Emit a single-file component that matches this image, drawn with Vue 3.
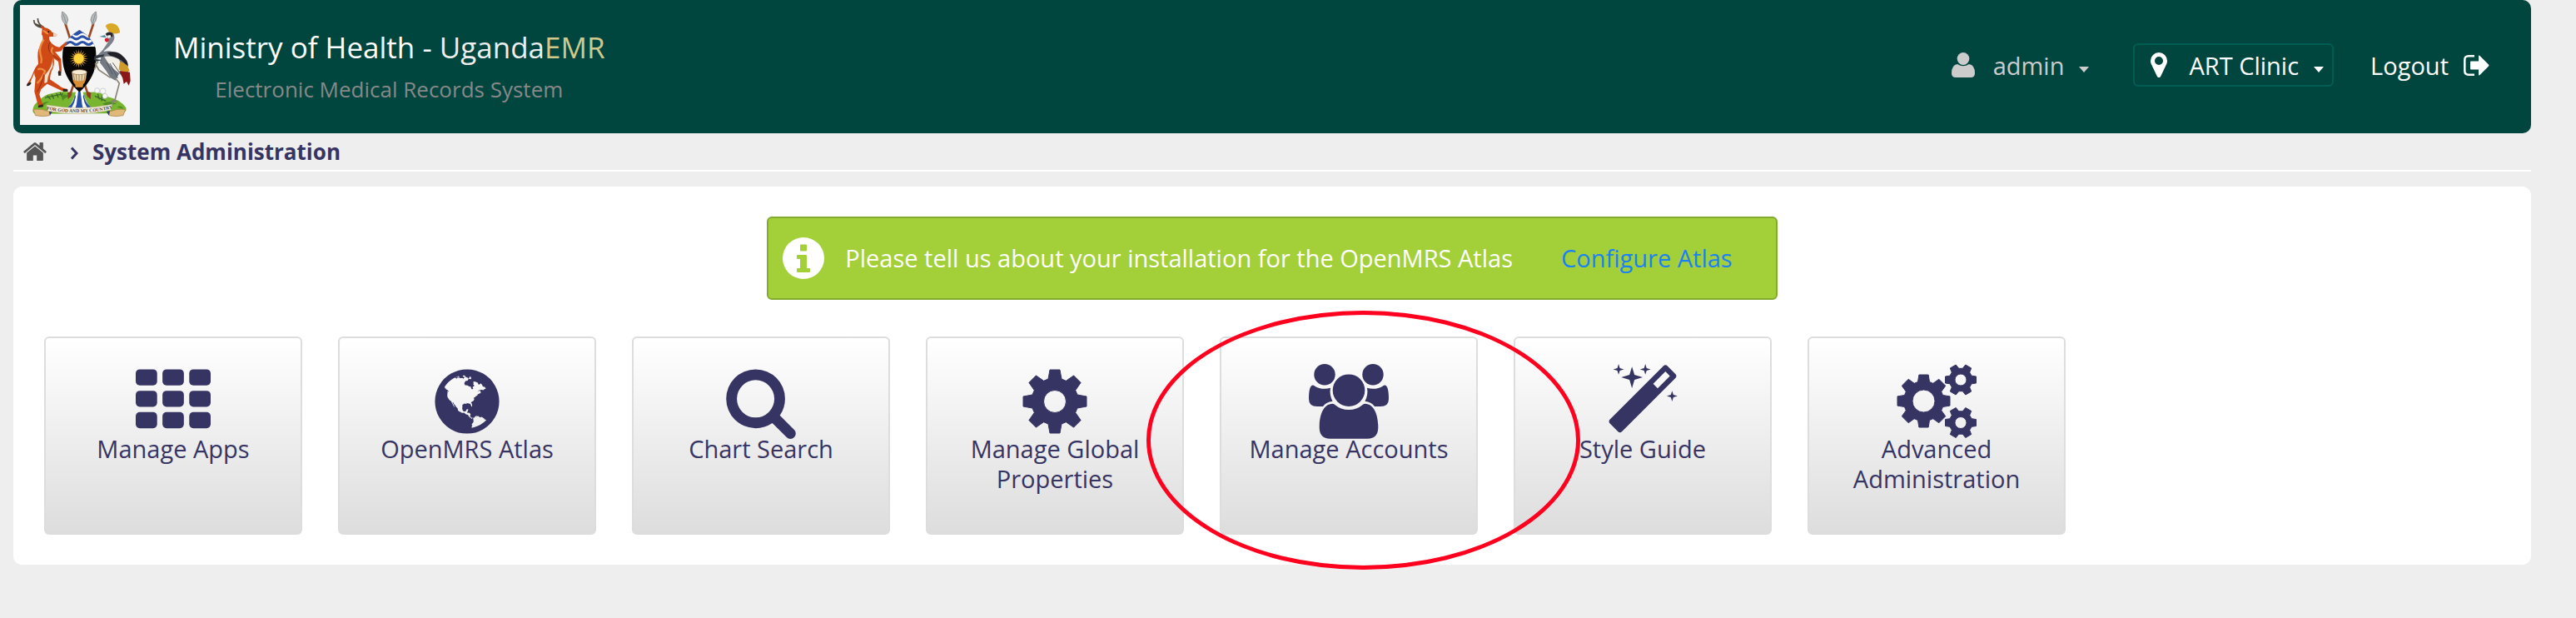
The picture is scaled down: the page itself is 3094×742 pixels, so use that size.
<script setup>
// Outline of a cog wheel with evenly spaced trapezoid teeth and a round hole.
function cog(cx, cy, teeth, outer, root, tip, base, hole, start) {
  const pts = []
  for (let i = 0; i < teeth; i++) {
    const a = start + (i * 2 * Math.PI) / teeth
    const c = Math.cos(a)
    const s = Math.sin(a)
    for (const [x, y] of [[-base, -root], [-tip, -outer], [tip, -outer], [base, -root]]) {
      pts.push(`${(cx + x * c - y * s).toFixed(1)} ${(cy + x * s + y * c).toFixed(1)}`)
    }
  }
  return `M${pts.join('L')}ZM${cx - hole} ${cy}a${hole} ${hole} 0 1 0 ${2 * hole} 0a${hole} ${hole} 0 1 0 ${-2 * hole} 0Z`
}

const singleCog = cog(45, 45, 8, 38, 27, 6, 8, 13.5, 0)
const bigCog = cog(32.5, 44.5, 8, 31.5, 23, 5.6, 7, 13.5, 0)
const upperCog = cog(77, 19, 6, 18.5, 13, 4, 4.8, 7, Math.PI / 6)
const lowerCog = cog(77, 70.5, 6, 18.5, 13, 4, 4.8, 7, Math.PI / 6)

const rays = Array.from({ length: 20 }, (_, i) => i * 18)
const cells = [0, 1, 2].flatMap((r) => [0, 1, 2].map((c) => ({ x: c * 640, y: 128 + r * 512 })))

const apps = [
  { id: 'apps', label: 'Manage Apps' },
  { id: 'atlas', label: 'OpenMRS Atlas' },
  { id: 'search', label: 'Chart Search' },
  { id: 'properties', label: 'Manage Global Properties' },
  { id: 'accounts', label: 'Manage Accounts', marked: true },
  { id: 'style', label: 'Style Guide' },
  { id: 'advanced', label: 'Advanced Administration' },
]
</script>

<template>
  <div class="page">
    <header class="header">
      <a href="#" class="crest" aria-label="Home page">
        <svg viewBox="42 18 432 432" aria-hidden="true">
          <rect x="42" y="18" width="432" height="432" fill="#f4f4f4" />
          <!-- mound -->
          <path d="M88 398Q90 374 108 366Q128 340 160 336Q190 326 218 332L300 332Q330 330 356 348Q404 358 424 388Q428 404 410 408L100 410Q88 408 88 398Z" fill="#78b62f" />
          <path d="M104 386q20-22 44-20q-20 8-24 22zM190 344q18-8 30 4q-20 4-24 16zM340 374q26-14 50 0q-24 2-30 14zM392 386q14-10 24 6z" fill="#4f8d22" />
          <path d="M132 352l66-14M140 344l12 14M156 340l8 16M174 336l6 16M186 332l6 14M312 346l40 18M322 338l6 20M338 344l-2 20" stroke="#3d6a2a" stroke-width="4" fill="none" />
          <g fill="#f7f7f7" stroke="#aaa" stroke-width="1.5"><circle cx="320" cy="326" r="9" /><circle cx="341" cy="328" r="10" /><circle cx="348" cy="346" r="9" /></g>
          <!-- river -->
          <path d="M244 330H268Q276 362 298 392H212Q236 364 244 330Z" fill="#fff" />
          <path d="M252 330H260L264 360Q266 388 272 394H240Q248 374 248 358ZM240 340Q236 372 214 386L226 392Q240 370 243 348ZM272 340Q276 372 298 386L286 392Q272 370 269 348Z" fill="#2950a8" />
          <!-- spears -->
          <path d="M205 84L290 350M307 84L220 350" stroke="#9b4a26" stroke-width="8" />
          <path d="M194 42Q212 50 215 72L209 90Q194 80 192 60ZM316 42Q300 50 297 72L303 90Q318 78 318 60Z" fill="#b7bcbf" stroke="#6d7274" stroke-width="2" />
          <path d="M198 50L208 84M313 50L304 84" stroke="#74797b" stroke-width="2" />
          <path d="M213 334l12-4 4 12-14 16zM298 334l-12-4-4 12 14 16z" fill="#8c3f24" />
          <!-- shield -->
          <clipPath id="shield"><path d="M256 108Q300 134 314 172Q330 268 256 332Q182 268 198 172Q212 134 256 108Z" /></clipPath>
          <g clip-path="url(#shield)">
            <rect x="180" y="100" width="152" height="240" fill="#060606" />
            <rect x="180" y="100" width="152" height="68" fill="#fff" />
            <path d="M190 124q11 9 22 0t22 0 22 0 22 0 22 0 22 0V96H190z" fill="#2950a8" />
            <path d="M190 136q11 9 22 0t22 0 22 0 22 0 22 0 22 0M190 156q11 9 22 0t22 0 22 0 22 0 22 0 22 0" fill="none" stroke="#2950a8" stroke-width="9" />
          </g>
          <path v-for="r in rays" :key="r" d="M250 211L254 177L258 211Z" fill="#f3bd32" :transform="`rotate(${r} 254 211)`" />
          <circle cx="254" cy="211" r="19" fill="#ffd33c" stroke="#9c6a12" stroke-width="2" />
          <path d="M230 264Q230 298 241 304L242 314H268L270 304Q282 294 281 264Z" fill="#d98e35" />
          <path d="M229 262L235 288Q255 296 276 288L283 262Z" fill="#e8d5ac" />
          <path d="M234 266l5 23M244 266l2 25M255 266v26M266 266l-2 25M277 266l-4 23" stroke="#7b5b35" stroke-width="2" />
          <ellipse cx="256" cy="260" rx="27" ry="9" fill="#f5ecd6" stroke="#8f6e42" stroke-width="2" />
          <!-- antelope -->
          <path d="M124 100Q92 96 92 72M128 98Q106 88 106 66M132 102Q118 94 98 86" fill="none" stroke="#514b3e" stroke-width="5" />
          <path d="M122 104Q114 94 120 92L132 100Q148 102 158 116L175 124Q176 132 164 132L148 132Q144 142 156 156Q172 170 184 170L208 150L212 156L190 184Q176 188 168 186L190 212L192 254L186 274L178 262L184 252L180 222L164 210Q168 236 156 256Q150 272 150 286L180 306Q196 320 212 320L214 330L194 328L140 302Q130 310 118 322L112 340L124 378L110 386L106 376L94 330L98 280Q92 268 94 262Q84 284 78 300L68 302Q84 280 92 256Q98 240 108 230L106 204Q104 176 122 154Q128 134 120 124Z" fill="#cf4a17" />
          <path d="M128 142Q108 172 116 196Q122 212 118 228M126 110L144 122M106 250Q120 244 132 256Q124 280 104 300M160 170Q150 188 162 198" fill="none" stroke="#ee8b3c" stroke-width="7" />
          <path d="M160 206Q160 240 132 270L130 300L140 296Q144 262 160 240Z" fill="#f1dfc7" />
          <path d="M128 268Q118 310 104 330M150 152Q140 170 150 188Q160 200 184 216" fill="none" stroke="#8e2a10" stroke-width="3" />
          <path d="M66 310Q64 298 82 296L82 302Q76 310 66 310ZM180 256L190 258L190 272L180 272ZM196 320L214 322L214 330L198 330ZM108 380L124 376L126 384L108 388Z" fill="#2d2420" />
          <circle cx="145" cy="115" r="3" fill="#1b1010" />
          <path d="M162 118l12 5 0 8-12 0z" fill="#f0d2bd" />
          <!-- crane -->
          <path d="M366 120L350 94Q362 78 386 88Q402 98 402 118Q384 124 366 120Z" fill="#d8a826" />
          <path d="M356 126Q364 112 378 120Q388 134 376 152Q364 170 346 182L340 194L326 206L318 216L322 198L340 180Q352 164 360 150Z" fill="#7b828b" />
          <path d="M350 122Q362 110 376 120L376 132L360 136Z" fill="#25252b" />
          <path d="M328 132L348 126L352 136Z" fill="#4d8f99" />
          <path d="M356 128l12-2 2 8-10 4z" fill="#f4f4f4" /><path d="M348 140q8-8 14 2q0 10-8 10q-8-4-6-12z" fill="#d8192c" />
          <path d="M338 188Q366 176 394 196Q420 214 428 240L436 282L420 284L400 264L386 290L368 280L352 254L330 226Z" fill="#727982" />
          <path d="M346 204Q372 198 398 214L412 240L400 264Q364 240 346 204Z" fill="#f2efe8" />
          <path d="M356 190Q392 180 412 202Q432 218 432 240L408 218Q390 204 366 200Z" fill="#202026" />
          <path d="M402 222Q430 228 437 256L414 262L398 250Z" fill="#cf9a28" />
          <path d="M400 256L438 260L440 292L434 308L426 294L416 302L412 282Z" fill="#8b1718" />
          <path d="M312 200l34-4-4 8-32 8 28 4-20 6-10-8z" fill="#333940" />
          <path d="M386 282L400 300L384 360L390 370M384 360L368 366M384 360L374 374M368 280L326 252L314 230L324 224M318 232L310 250" fill="none" stroke="#8b8373" stroke-width="5" />
          <path d="M366 228L394 282M376 226L404 266M354 224L376 268" stroke="#525962" stroke-width="3" />
          <!-- motto ribbon -->
          <path d="M90 394Q120 390 148 402L148 416Q126 422 98 416ZM422 394Q392 390 364 402L364 416Q386 422 414 416Z" fill="#e0b97a" stroke="#a37c43" stroke-width="2" />
          <path d="M146 398l12 4-8 14zM366 398l-12 4 8 14z" fill="#2d3a75" />
          <path id="motto" d="M140 394Q256 418 374 391" fill="none" />
          <path d="M138 378Q256 400 374 376L370 396Q256 422 142 400Z" fill="#f5efdc" stroke="#b9aa86" stroke-width="1.5" />
          <text class="motto"><textPath href="#motto" startOffset="50%" text-anchor="middle">FOR GOD AND MY COUNTRY</textPath></text>
        </svg>
      </a>
      <div class="brand">
        <h1>Ministry of Health - <span class="uganda">Uganda</span><span class="emr">EMR</span></h1>
        <p>Electronic Medical Records System</p>
      </div>
      <nav class="session" aria-label="Session">
        <button type="button" class="user">
          <svg class="person" viewBox="0 0 28 30" aria-hidden="true"><ellipse cx="14" cy="7.5" rx="7.3" ry="7.5" /><path d="M7 14Q14 18.500 21 14Q28 15 28 25Q28 30 23 30H5Q0 30 0 25Q0 15 7 14Z" /></svg>
          <span>admin</span>
          <svg class="caret" viewBox="0 0 12 7" aria-hidden="true"><path d="M0 0H12L6 7Z" /></svg>
        </button>
        <button type="button" class="location">
          <svg class="pin" viewBox="384 128 1024 1536" aria-hidden="true"><path d="M1152 640q0-106-75-181t-181-75-181 75-75 181 75 181 181 75 181-75 75-181zm256 0q0 109-33 179l-364 774q-16 33-47.5 52t-67.5 19-67.5-19-46.5-52l-365-774q-33-70-33-179 0-212 150-362t362-150 362 150 150 362z" /></svg>
          <span>ART Clinic</span>
          <svg class="caret" viewBox="0 0 12 7" aria-hidden="true"><path d="M0 0H12L6 7Z" /></svg>
        </button>
        <a href="#" class="logout">
          <span>Logout</span>
          <svg class="exit" viewBox="0 0 31 25" aria-hidden="true"><path d="M13 1.300H6Q1.300 1.300 1.300 6V19Q1.300 23.700 6 23.700H13" fill="none" stroke="currentColor" stroke-width="2.500" /><path d="M9 7.500H18V1.500Q18 0 19.500 1L30 11.500Q31 12.500 30 13.500L19.500 24Q18 25 18 23.500V17.500H9Q8 17.500 8 16.500V8.500Q8 7.500 9 7.500Z" /></svg>
        </a>
      </nav>
    </header>

    <nav class="crumbs" aria-label="Breadcrumb">
      <a href="#" class="home" aria-label="Home">
        <svg viewBox="89 253 1614 1283" aria-hidden="true"><path d="M1472 992v480q0 26-19 45t-45 19h-384v-384h-256v384h-384q-26 0-45-19t-19-45v-480q0-1 .5-3t.5-3l575-474 575 474q1 2 1 6zm223-69l-62 74q-8 9-21 11h-3q-13 0-21-7l-692-577-692 577q-12 8-24 7-13-2-21-11l-62-74q-8-10-7-23.500t11-21.500l719-599q32-26 76-26t76 26l244 204v-195q0-14 9-23t23-9h192q14 0 23 9t9 23v408l219 182q10 8 11 21.500t-7 23.500z" /></svg>
      </a>
      <svg class="chevron" viewBox="0 0 10 16" aria-hidden="true"><path d="M2 1.500L8 8L2 14.500" /></svg>
      <span>System Administration</span>
    </nav>

    <main class="panel">
      <div class="notice" role="status">
        <svg class="info" viewBox="0 0 50 50" aria-hidden="true">
          <circle cx="25" cy="25" r="25" fill="#fff" />
          <path d="M22 8.500h6q1 0 1 1v6q0 1-1 1h-6q-1 0-1-1v-6q0-1 1-1zM18 21h10q1 0 1 1v15h3q1 0 1 1v3q0 1-1 1h-14q-1 0-1-1v-3q0-1 1-1h3V26h-3q-1 0-1-1v-3q0-1 1-1z" fill="#a3d039" />
        </svg>
        <p>Please tell us about your installation for the OpenMRS Atlas</p>
        <a href="#">Configure Atlas</a>
      </div>

      <div class="apps">
        <a v-for="app in apps" :key="app.id" href="#" class="app">
          <svg v-if="app.id === 'apps'" class="icon" viewBox="0 0 1792 1792" aria-hidden="true"><rect v-for="(c, i) in cells" :key="i" :x="c.x" :y="c.y" width="512" height="384" rx="96" /></svg>
          <svg v-else-if="app.id === 'atlas'" class="icon" viewBox="0 0 1792 1792" aria-hidden="true"><path d="M896 128q209 0 385.5 103t279.5 279.5 103 385.5-103 385.5-279.5 279.5-385.5 103-385.5-103-279.5-279.5-103-385.5 103-385.5 279.5-279.5 385.5-103zm274 521q-2 1-9.5 9.5t-13.5 9.5q2 0 4.5-5t5-11 3.5-7q6-7 22-15 14-6 52-12 34-8 51 11-2-2 9.5-13t14.5-12q3-2 15-4.5t15-7.5l2-22q-12 1-17.5-7t-6.5-21q0 2-6 8 0-7-4.5-8t-11.5 1-9 1q-10-3-15-7.5t-8-16.500-4-15q-2-5-9.500-11t-9.500-10q-1-2-2.500-5.500t-3-6.500-4-5.500-5.500-2.500-7 5-7.500 10-4.500 5q-3-2-6-1.500t-4.500 1-4.500 3-5 3.500q-3 2-8.500 3t-8.500 2q15-5-1-11-10-4-16-3 9-4 7.500-12t-8.500-14h5q-1-4-8.500-8.500t-17.500-8.500-13-6q-8-5-34-9.500t-33-.5q-5 6-4.500 10.500t4 14 3.500 12.500q1 6-5.500 13t-6.500 12q0 7 14 15.500t10 21.500q-3 8-16 16t-16 12q-5 8-1.500 18.500t10.500 16.500q2 2 1.500 4t-3.500 4.500-5.500 4-6.500 3.500l-3 2q-11 5-20.500-6t-13.500-26q-7-25-16-30-23-8-29 1-5-13-41-26-25-9-58-4 6-1 0-15-7-15-19-12 3-6 4-17.500t1-13.500q3-13 12-23 1-1 7-8.500t9.500-13.500.5-6q35 4 50-11 5-5 11.500-17t10.500-17q9-6 14-5.500t14.500 5.500 14.500 5q14 1 15.500-11t-7.500-20q12 1 3-17-4-7-8-9-12-4-27 5-8 4 2 8-1-1-9.500 10.500t-16.500 17.500-16-5q-1-1-5.500-13.500t-9.500-13.500q-8 0-16 15 3-8-11-15t-24-8q19-12-8-27-7-4-20.500-5t-19.500 4q-5 7-5.500 11.500t5 8 10.500 5.500 11.500 4 8.500 3q14 10 8 14-2 1-8.500 3.500t-11.500 4.500-6 4q-3 4 0 14t-2 14q-5-5-9-17.500t-7-16.500q7 9-25 6l-10-1q-4 0-16 2t-20.500 1-13.500-8q-4-8 0-20 1-4 4-2-4-3-11-9.500t-10-8.500q-46 15-94 41 6 1 12-1 5-2 13-6.500t10-5.500q34-14 42-7l5-5q14 16 20 25-7-4-30-1-20 6-22 12 7 12 5 18-4-3-11.500-10t-14.500-11-15-5q-16 0-22 1-146 80-235 222 7 7 12 8 4 1 5 9t2.500 11 11.500-3q9 8 3 19 1-1 44 27 19 17 21 21 3 11-10 18-1-2-9-9t-9-4q-3 5 .5 18.500t10.500 12.500q-7 0-9.500 16t-2.500 35.500-1 23.500l2 1q-3 12 5.500 34.500t21.500 19.500q-13 3 20 43 6 8 8 9 3 2 12 7.500t15 10 10 10.500q4 5 10 22.500t14 23.500q-2 6 9.500 20t10.500 23q-1 0-2.500 1t-2.500 1q3 7 15.500 14t15.500 13q1 3 2 10t3 11 8 2q2-20-24-62-15-25-17-29-3-5-5.500-15.500t-4.500-14.500q2 0 6 1.500t8.500 3.500 7.500 4 2 3q-3 7 2 17.500t12 18.500 17 19 12 13q6 6 14 19.500t0 13.500q9 0 20 10t17 20q5 8 8 26t5 24q2 7 8.500 13.500t12.500 9.500l16 8 13 7q5 2 18.500 10.500t21.500 11.500q10 4 16 4t14.500-2.500 13.500-3.500q15-2 29 15t21 21q36 19 55 11-2 1 .5 7.500t8 15.500 9 14.500 5.500 8.500q5 6 18 15t18 15q6-4 7-9-3 8 7 20t18 10q14-3 14-32-31 15-49-18 0-1-2.500-5.500t-4-8.500-2.500-8.500 0-7.500 5-3q9 0 10-3.500t-2-12.500-4-13q-1-8-11-20t-12-15q-5 9-16 8t-16-9q0 1-1.500 5.500t-1.500 6.500q-13 0-15-1 1-3 2.500-17.500t3.500-22.500q1-4 5.500-12t7.500-14.500 4-12.500-4.500-9.500-17.500-2.500q-19 1-26 20-1 3-3 10.500t-5 11.500-9 7q-7 3-24 2t-24-5q-13-8-22.500-29t-9.500-37q0-10 2.500-26.500t3-25-5.500-24.500q3-2 9-9.500t10-10.500q2-1 4.500-1.500t4.500 0 4-1.500 3-6q-1-1-4-3-3-3-4-3 7 3 28.500-1.500t27.500 1.500q15 11 22-2 0-1-2.500-9.500t-.5-13.500q5 27 29 9 3 3 15.500 5t17.500 5q3 2 7 5.500t5.500 4.500 5-.5 8.500-6.500q10 14 12 24 11 40 19 44 7 3 11 2t4.500-9.500 0-14-1.500-12.500l-1-8v-18l-1-8q-15-3-18.500-12t1.500-18.500 15-18.500q1-1 8-3.500t15.500-6.500 12.500-8q21-19 15-35 7 0 11-9-1 0-5-3t-7.500-5-4.500-2q9-5 2-16 5-3 7.500-11t7.500-10q9 12 21 2 7-8 1-16 5-7 20.500-10.500t18.500-9.500q7 2 8-2t1-12 3-12q4-5 15-9t13-5l17-11q3-4 0-4 18 2 31-11 10-11-6-20 3-6-3-9.500t-15-5.500q3-1 11.500-.5t10.500-1.500q15-10-7-16-17-5-43 12zm-163 877q206-36 351-189-3-3-12.500-4.500t-12.500-3.500q-18-7-24-8 1-7-2.500-13t-8-9-12.500-8-11-7q-2-2-7-6t-7-5.500-7.500-4.500-8.500-2-10 1l-3 1q-3 1-5.500 2.500t-5.500 3-4 3 0 2.500q-21-17-36-22-5-1-11-5.500t-10.500-7-10-1.500-11.500 7q-5 5-6 15t-2 13q-7-5 0-17.500t2-18.500q-3-6-10.500-4.500t-12 4.500-11.500 8.500-9 6.500-8.500 5.500-8.500 7.500q-3 4-6 12t-5 11q-2-4-11.500-6.500t-9.500-5.500q2 10 4 35t5 38q7 31-12 48-27 25-29 40-4 22 12 26 0 7-8 20.500t-7 21.500q0 6 2 16z" /></svg>
          <svg v-else-if="app.id === 'search'" class="icon" viewBox="0 0 1792 1792" aria-hidden="true"><path d="M1216 832q0-185-131.500-316.500t-316.500-131.500-316.500 131.500-131.500 316.500 131.500 316.500 316.500 131.500 316.500-131.500 131.500-316.500zm512 832q0 52-38 90t-90 38q-54 0-90-38l-343-342q-179 124-399 124-143 0-273.500-55.500t-225-150-150-225-55.500-273.500 55.500-273.500 150-225 225-150 273.500-55.500 273.500 55.500 225 150 150 225 55.500 273.500q0 220-124 399l343 343q37 37 37 90z" /></svg>
          <svg v-else-if="app.id === 'properties'" class="icon cog" viewBox="0 0 90 90" aria-hidden="true"><path :d="singleCog" /></svg>
          <svg v-else-if="app.id === 'accounts'" class="icon wide" viewBox="0 0 96 90" aria-hidden="true">
            <circle cx="19" cy="12.700" r="12.700" /><circle cx="77" cy="12.700" r="12.700" /><circle cx="48" cy="31.700" r="19.300" />
            <path d="M31 48.700Q38.500 55 48 55Q57.500 55 65 48.700Q66 47.700 67.500 47.700C79 48 83.300 62 83.300 76Q83.300 89.700 70.500 89.700H25.500Q12.700 89.700 12.700 76C12.700 62 17 48 28.500 47.700Q30 47.700 31 48.700Z" />
            <path d="M4.800 25.600Q6 25.600 7 26.400Q12 29.800 19 29.800Q22.500 29.800 26 28.800Q24.500 37 28.500 44.700Q21 45.500 17 51H10Q0 51 0 42Q0 26 4.800 25.600Z" />
            <path d="M91.200 25.600Q90 25.600 89 26.400Q84 29.800 77 29.800Q73.500 29.800 70 28.800Q71.500 37 67.500 44.700Q75 45.500 79 51H86Q96 51 96 42Q96 26 91.200 25.600Z" />
          </svg>
          <svg v-else-if="app.id === 'style'" class="icon" viewBox="0 0 1792 1792" aria-hidden="true"><path d="M1254 581l293-293-107-107-293 293zm447-293q0 27-18 45l-1286 1286q-18 18-45 18t-45-18l-198-198q-18-18-18-45t18-45l1286-1286q18-18 45-18t45 18l198 198q18 18 18 45zm-1351-190l98 30-98 30-30 98-30-98-98-30 98-30 30-98zm350 162l196 60-196 60-60 196-60-196-196-60 196-60 60-196zm930 478l98 30-98 30-30 98-30-98-98-30 98-30 30-98zm-640-640l98 30-98 30-30 98-30-98-98-30 98-30 30-98z" /></svg>
          <svg v-else class="icon wide cog" viewBox="0 0 96 90" aria-hidden="true"><path :d="bigCog" /><path :d="upperCog" /><path :d="lowerCog" /></svg>
          <span class="label">{{ app.label }}</span>
          <span v-if="app.marked" class="marker" aria-hidden="true"></span>
        </a>
      </div>
    </main>
  </div>
</template>

<style>
body {
  margin: 0;
  background: #eee;
}
</style>

<style scoped>
.page {
  padding: 0 54px 64px 16px;
  font-family: "Open Sans", "Noto Sans", sans-serif;
  font-size: 29px;
  line-height: 36px;
  color: #363463;
}
.page * {
  box-sizing: border-box;
}
svg {
  display: block;
  flex: none;
  fill: currentColor;
}
a {
  color: inherit;
  text-decoration: none;
}
button {
  font: inherit;
  color: inherit;
  background: none;
  border: 0;
  padding: 0;
  cursor: pointer;
}
h1,
p {
  margin: 0;
}
.header {
  display: flex;
  align-items: flex-start;
  height: 160px;
  padding: 6px 50px 6px 8px;
  border-radius: 10px;
  background: #00463f;
  color: #fff;
}
.crest svg {
  width: 144px;
  height: 144px;
}
.motto {
  font-family: "Liberation Serif", serif;
  font-size: 17px;
  font-weight: 700;
  fill: #4b443b;
}
.brand {
  margin-left: 40px;
  padding-top: 23px;
  text-align: center;
}
.brand h1 {
  font-size: 35px;
  line-height: 56px;
  font-weight: 400;
}
.uganda {
  color: #eee;
}
.emr {
  color: #d1c98c;
}
.brand p {
  font-size: 26px;
  line-height: 44px;
  color: #888;
}
.session {
  display: flex;
  align-items: center;
  height: 52px;
  margin: 46px 0 0 auto;
}
.session > * {
  display: flex;
  align-items: center;
}
.session span {
  padding-top: 2px;
}
.user {
  color: #ccc;
}
.person {
  width: 28px;
  height: 30px;
  margin-right: 22px;
}
.caret {
  width: 12px;
  height: 7px;
  margin: 10px 0 0 18px;
}
.location {
  height: 52px;
  margin: 0 44px 0 53px;
  padding: 0 10px 0 19px;
  border: 2px solid #005d52;
  border-radius: 6px;
}
.pin {
  width: 20px;
  height: 30px;
  margin-right: 26px;
}
.exit {
  width: 31px;
  height: 25px;
  margin-left: 18px;
}
.crumbs {
  display: flex;
  align-items: center;
  height: 46px;
  padding: 0 12px;
  border-bottom: 2px solid #fff;
  font-size: 26px;
  font-weight: 700;
}
.home {
  color: #555;
}
.home svg {
  width: 28px;
  height: 22px;
}
.chevron {
  width: 10px;
  height: 16px;
  margin: 4px 17px 0 28px;
  fill: none;
  stroke: currentColor;
  stroke-width: 3;
}
.panel {
  margin-top: 18px;
  padding: 36px 37px;
  border-radius: 10px;
  background: #fff;
}
.notice {
  display: flex;
  align-items: center;
  width: fit-content;
  height: 100px;
  margin: 0 auto 44px;
  padding: 0 52px 0 17px;
  border: 2px solid #82aa2e;
  border-radius: 6px;
  background: #a3d039;
  color: #fff;
}
.info {
  width: 50px;
  height: 50px;
  margin-right: 25px;
}
.notice a {
  margin-left: 58px;
  color: #1a80f5;
}
.apps {
  display: flex;
  flex-wrap: wrap;
  gap: 43px;
}
.app {
  position: relative;
  display: flex;
  flex-direction: column;
  align-items: center;
  width: 310px;
  height: 238px;
  padding: 31px 30px 0;
  border: 2px solid #ddd;
  border-radius: 6px;
  background: linear-gradient(#fff, #ddd);
  text-align: center;
}
.icon {
  width: 90px;
  height: 90px;
  margin-bottom: -6px;
}
.wide {
  width: 96px;
}
.cog {
  fill-rule: evenodd;
  stroke: currentColor;
  stroke-width: 1;
  stroke-linejoin: round;
}
.marker {
  position: absolute;
  z-index: 1;
  top: -33px;
  left: -90px;
  width: 521px;
  height: 311px;
  border: 5px solid #ff001e;
  border-radius: 50%;
  pointer-events: none;
}
</style>
